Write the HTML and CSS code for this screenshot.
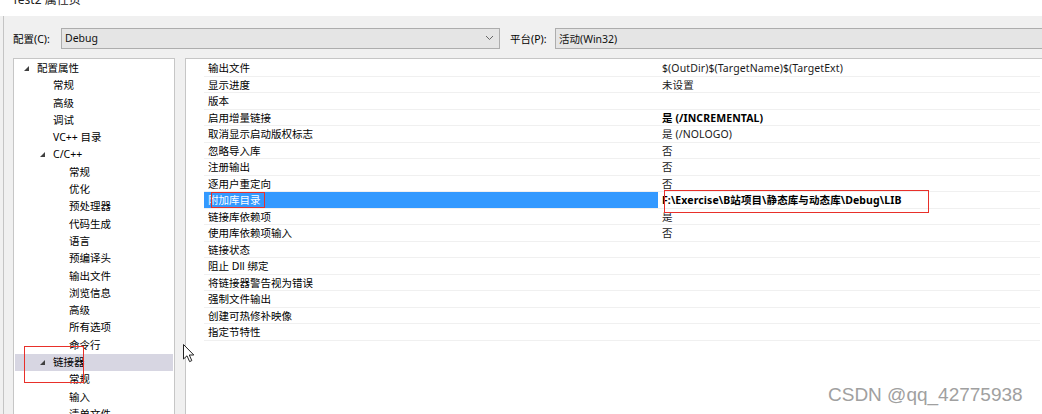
FILE: index.html
```html
<!DOCTYPE html>
<html lang="zh-CN">
<head>
  <meta charset="UTF-8">
  <title>Test2 属性页</title>
  <link rel="stylesheet" href="styles.css">
</head>
<body>
  <div class="titlebar"><span class="title">Test2 属性页</span></div>

  <div class="window">
    <!-- 配置 / 平台 -->
    <div class="toolbar">
      <span class="label">配置(C):</span>
      <div class="select config">
        <span>Debug</span>
        <svg class="chevron" width="9" height="6" viewBox="0 0 9 6"><polyline points="1,1 4.5,4.5 8,1" fill="none" stroke="#666" stroke-width="1"/></svg>
      </div>
      <span class="label platform-label">平台(P):</span>
      <div class="select platform">
        <span>活动(Win32)</span>
      </div>
    </div>

    <div class="main">
      <!-- 左侧树 -->
      <div class="tree">
        <div class="node lv0"><i class="arrow"></i>配置属性</div>
        <div class="node lv1">常规</div>
        <div class="node lv1">高级</div>
        <div class="node lv1">调试</div>
        <div class="node lv1">VC++ 目录</div>
        <div class="node lv1"><i class="arrow"></i>C/C++</div>
        <div class="node lv2">常规</div>
        <div class="node lv2">优化</div>
        <div class="node lv2">预处理器</div>
        <div class="node lv2">代码生成</div>
        <div class="node lv2">语言</div>
        <div class="node lv2">预编译头</div>
        <div class="node lv2">输出文件</div>
        <div class="node lv2">浏览信息</div>
        <div class="node lv2">高级</div>
        <div class="node lv2">所有选项</div>
        <div class="node lv2">命令行</div>
        <div class="node lv1 selected"><i class="arrow"></i>链接器</div>
        <div class="node lv2">常规</div>
        <div class="node lv2">输入</div>
        <div class="node lv2">清单文件</div>
      </div>

      <!-- 右侧属性表 -->
      <div class="grid">
        <div class="prop"><span class="name">输出文件</span><span class="value">$(OutDir)$(TargetName)$(TargetExt)</span></div>
        <div class="prop"><span class="name">显示进度</span><span class="value">未设置</span></div>
        <div class="prop"><span class="name">版本</span><span class="value"></span></div>
        <div class="prop"><span class="name">启用增量链接</span><span class="value bold">是 (/INCREMENTAL)</span></div>
        <div class="prop"><span class="name">取消显示启动版权标志</span><span class="value">是 (/NOLOGO)</span></div>
        <div class="prop"><span class="name">忽略导入库</span><span class="value">否</span></div>
        <div class="prop"><span class="name">注册输出</span><span class="value">否</span></div>
        <div class="prop"><span class="name">逐用户重定向</span><span class="value">否</span></div>
        <div class="prop active"><span class="name">附加库目录</span><span class="value bold">F:\Exercise\B站项目\静态库与动态库\Debug\LIB</span></div>
        <div class="prop"><span class="name">链接库依赖项</span><span class="value">是</span></div>
        <div class="prop"><span class="name">使用库依赖项输入</span><span class="value">否</span></div>
        <div class="prop"><span class="name">链接状态</span><span class="value"></span></div>
        <div class="prop"><span class="name">阻止 Dll 绑定</span><span class="value"></span></div>
        <div class="prop"><span class="name">将链接器警告视为错误</span><span class="value"></span></div>
        <div class="prop"><span class="name">强制文件输出</span><span class="value"></span></div>
        <div class="prop"><span class="name">创建可热修补映像</span><span class="value"></span></div>
        <div class="prop"><span class="name">指定节特性</span><span class="value"></span></div>
      </div>
    </div>
  </div>

  <!-- 标注框 -->
  <div class="mark mark-tree"></div>
  <div class="mark mark-name"></div>
  <div class="mark mark-value"></div>

  <!-- 鼠标 -->
  <svg class="cursor" width="12" height="19" viewBox="0 0 12 19">
    <path d="M0.5,0.5 L0.5,15 L4,11.8 L6.6,17.6 L8.8,16.6 L6.3,11 L10.8,11 Z" fill="#fff" stroke="#222" stroke-width="1"/>
  </svg>

  <div class="watermark">CSDN @qq_42775938</div>
</body>
</html>
```

FILE: styles.css
```css
body {
  margin: 0;
  width: 1042px;
  height: 414px;
  overflow: hidden;
  background-color: #f0f0f0;
  font-family: "Noto Sans", "Noto Sans CJK SC", sans-serif;
  font-size: 10.5px;
  color: #000;
  position: relative;
}
.titlebar {
  height: 16px;
  background-color: #fff;
  overflow: hidden;
  padding-left: 12px;
}
.title {
  display: block;
  font-size: 12px;
  line-height: 14px;
  margin-top: -7px;
  color: #222;
}
.window {
  margin-left: 3px;
  border-left: 1px solid #c4c4c4;
  height: 398px;
}
.toolbar {
  display: flex;
  align-items: center;
  height: 42px;
  padding-left: 9px;
  box-sizing: border-box;
  padding-top: 2px;
}
.label {
  width: 48px;
}
.platform-label {
  width: 45px;
  margin-left: 10px;
}
.select {
  height: 21px;
  box-sizing: border-box;
  background-color: #e5e5e5;
  border: 1px solid #adadad;
  display: flex;
  align-items: center;
  padding-left: 3px;
  color: #111;
}
.config {
  width: 439px;
  justify-content: space-between;
  padding-right: 5px;
}
.platform {
  flex: 1;
  margin-right: -20px;
}
.main {
  display: flex;
  height: 356px;
  gap: 10px;
}
.tree {
  margin-left: 9px;
  width: 162px;
  box-sizing: border-box;
  background-color: #fff;
  border: 1px solid #c6c6c6;
  border-bottom: none;
  padding-top: 1px;
}
.node {
  height: 17.3px;
  line-height: 17.3px;
  margin: 0 1px;
  position: relative;
  white-space: nowrap;
}
.lv0 { padding-left: 22px; }
.lv1 { padding-left: 38px; }
.lv2 { padding-left: 54px; }
.node.selected {
  background-color: #d7d6e2;
}
.arrow {
  position: absolute;
  width: 0;
  height: 0;
  border-left: 5px solid transparent;
  border-bottom: 5px solid #404040;
  top: 6px;
}
.lv0 .arrow { left: 9px; }
.lv1 .arrow { left: 25px; }
.grid {
  flex: 1;
  background-color: #fff;
  border-top: 1px solid #c6c6c6;
  border-left: 1px solid #c6c6c6;
  padding: 1px 2px 0 18px;
}
.prop {
  display: grid;
  grid-template-columns: 454px 1fr;
  height: 16.5px;
  line-height: 16px;
  box-sizing: border-box;
  border-bottom: 1px solid #f0f0f0;
}
.name {
  padding-left: 4px;
  white-space: nowrap;
}
.value {
  padding-left: 4px;
  color: #1a1a1a;
  white-space: nowrap;
  letter-spacing: 0.1px;
}
.bold {
  font-weight: bold;
  color: #000;
}
.prop.active .name {
  background-color: #3399ff;
  color: #fff;
}
.mark {
  position: absolute;
  border: 1.5px solid #e8302a;
  box-sizing: border-box;
}
.mark-tree {
  left: 24px;
  top: 346px;
  width: 60px;
  height: 37px;
}
.mark-name {
  left: 211px;
  top: 192px;
  width: 54px;
  height: 16px;
}
.mark-value {
  left: 664px;
  top: 190px;
  width: 265px;
  height: 23px;
}
.cursor {
  position: absolute;
  left: 183px;
  top: 344px;
}
.watermark {
  position: absolute;
  left: 828px;
  top: 384px;
  font-family: "Liberation Sans", Arial, sans-serif;
  font-size: 19px;
  color: #a0a0a0;
  text-shadow: 0 0 1px #fff;
}
```
